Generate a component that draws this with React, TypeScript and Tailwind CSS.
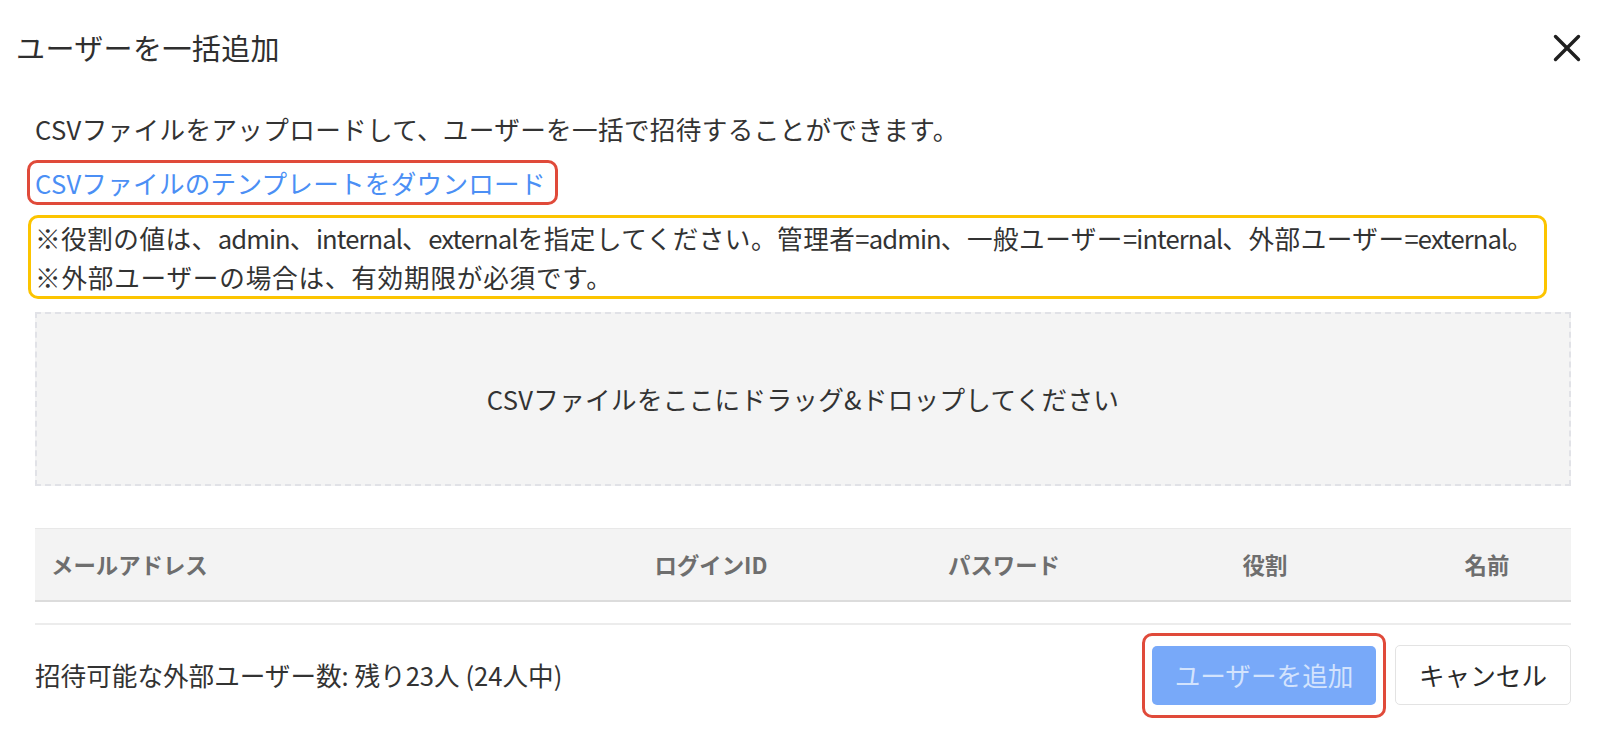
import React from 'react';

const columns = [
  { label: 'メールアドレス', align: 'justify-start pl-[16px]' },
  { label: 'ログインID', align: 'justify-center' },
  { label: 'パスワード', align: 'justify-center' },
  { label: '役割', align: 'justify-center' },
  { label: '名前', align: 'justify-center' },
];

// latin runs in the note are a bit narrower than the CJK font's latin
const Latin = ({ children }: { children: React.ReactNode }) => (
  <span className="tracking-[-0.9px]">{children}</span>
);

const CloseIcon = () => (
  <svg width="28" height="28" viewBox="0 0 28 28" fill="none" stroke="#1f1f1f" strokeWidth="3.4" strokeLinecap="round">
    <path d="M2.5 2.5 L25.5 25.5" />
    <path d="M25.5 2.5 L2.5 25.5" />
  </svg>
);

const App = () => {
  return (
    <div className="w-full h-[738px] bg-white text-[#333] font-['Noto_Sans_CJK_JP','Noto_Sans',sans-serif] overflow-hidden">
      {/* Header */}
      <div className="flex h-[96px] items-center justify-between pl-[16px] pr-[30px]">
        <h2 className="text-[29px] tracking-[0.4px] font-normal text-[#2f2f2f]">ユーザーを一括追加</h2>
        <button className="flex items-center justify-center w-[30px] h-[30px]">
          <CloseIcon />
        </button>
      </div>

      {/* Body */}
      <div className="pl-[35px] pr-[41px]">
        <p className="mt-[14px] text-[25.6px] tracking-[0.35px] leading-[38px] text-[#333]">
          CSVファイルをアップロードして、ユーザーを一括で招待することができます。
        </p>

        <div className="mt-[12px] -ml-[8px] inline-flex h-[45px] items-center rounded-[10px] border-[3px] border-[#e04a3a] pl-[5px] pr-[9px]">
          <a href="#" className="text-[25.6px] tracking-[0.25px] leading-none text-[#4b8ff5]">
            CSVファイルのテンプレートをダウンロード
          </a>
        </div>

        <div className="mt-[10px] -ml-[7px] w-[1519px] rounded-[10px] border-[3px] border-[#fcc400] pl-[4px] text-[25.6px] leading-[39px] text-[#333] whitespace-nowrap">
          <p className="tracking-[0.5px]">
            ※役割の値は、<Latin>admin</Latin>、<Latin>internal</Latin>、<Latin>external</Latin>を指定してください。管理者<Latin>=admin</Latin>、一般ユーザー<Latin>=internal</Latin>、外部ユーザー<Latin>=external</Latin>。
          </p>
          <p className="tracking-[0.8px]">※外部ユーザーの場合は、有効期限が必須です。</p>
        </div>

        {/* Drop zone */}
        <div className="mt-[13px] flex h-[174px] items-center justify-center border-2 border-dashed border-[#e1e2e7] bg-[#f4f4f4]">
          <span className="text-[25.6px] tracking-[0.3px] text-[#333]">CSVファイルをここにドラッグ&amp;ドロップしてください</span>
        </div>

        {/* Table */}
        <div className="mt-[42px] grid h-[74px] grid-cols-[506px_340px_246px_276px_168px] border-t border-b-2 border-t-[#e8e8e8] border-b-[#dcdcdc] bg-[#f3f3f3]">
          {columns.map((c) => (
            <div key={c.label} className={`flex items-center ${c.align} text-[22.4px] font-semibold text-[#6e6e6e]`}>
              {c.label}
            </div>
          ))}
        </div>
        <div className="mt-[21px] h-[2px] bg-[#ececec]" />

        {/* Footer */}
        <div className="flex h-[100px] items-center justify-between">
          <span className="text-[25.6px] text-[#333]">招待可能な外部ユーザー数: 残り23人 (24人中)</span>
          <div className="flex items-center gap-[9px]">
            <div className="rounded-[10px] border-[3px] border-[#e04a3a] px-[7px] py-[10px]">
              <button className="flex h-[59px] w-[224px] items-center justify-center rounded-[5px] bg-[#78a9f9] text-[25.6px] text-[#d3e3fd]">
                ユーザーを追加
              </button>
            </div>
            <button className="flex h-[60px] w-[176px] items-center justify-center rounded-[5px] border border-[#e3e3e3] bg-white text-[25.6px] text-[#2a2a2a]">
              キャンセル
            </button>
          </div>
        </div>
      </div>
    </div>
  );
};

export default App;
